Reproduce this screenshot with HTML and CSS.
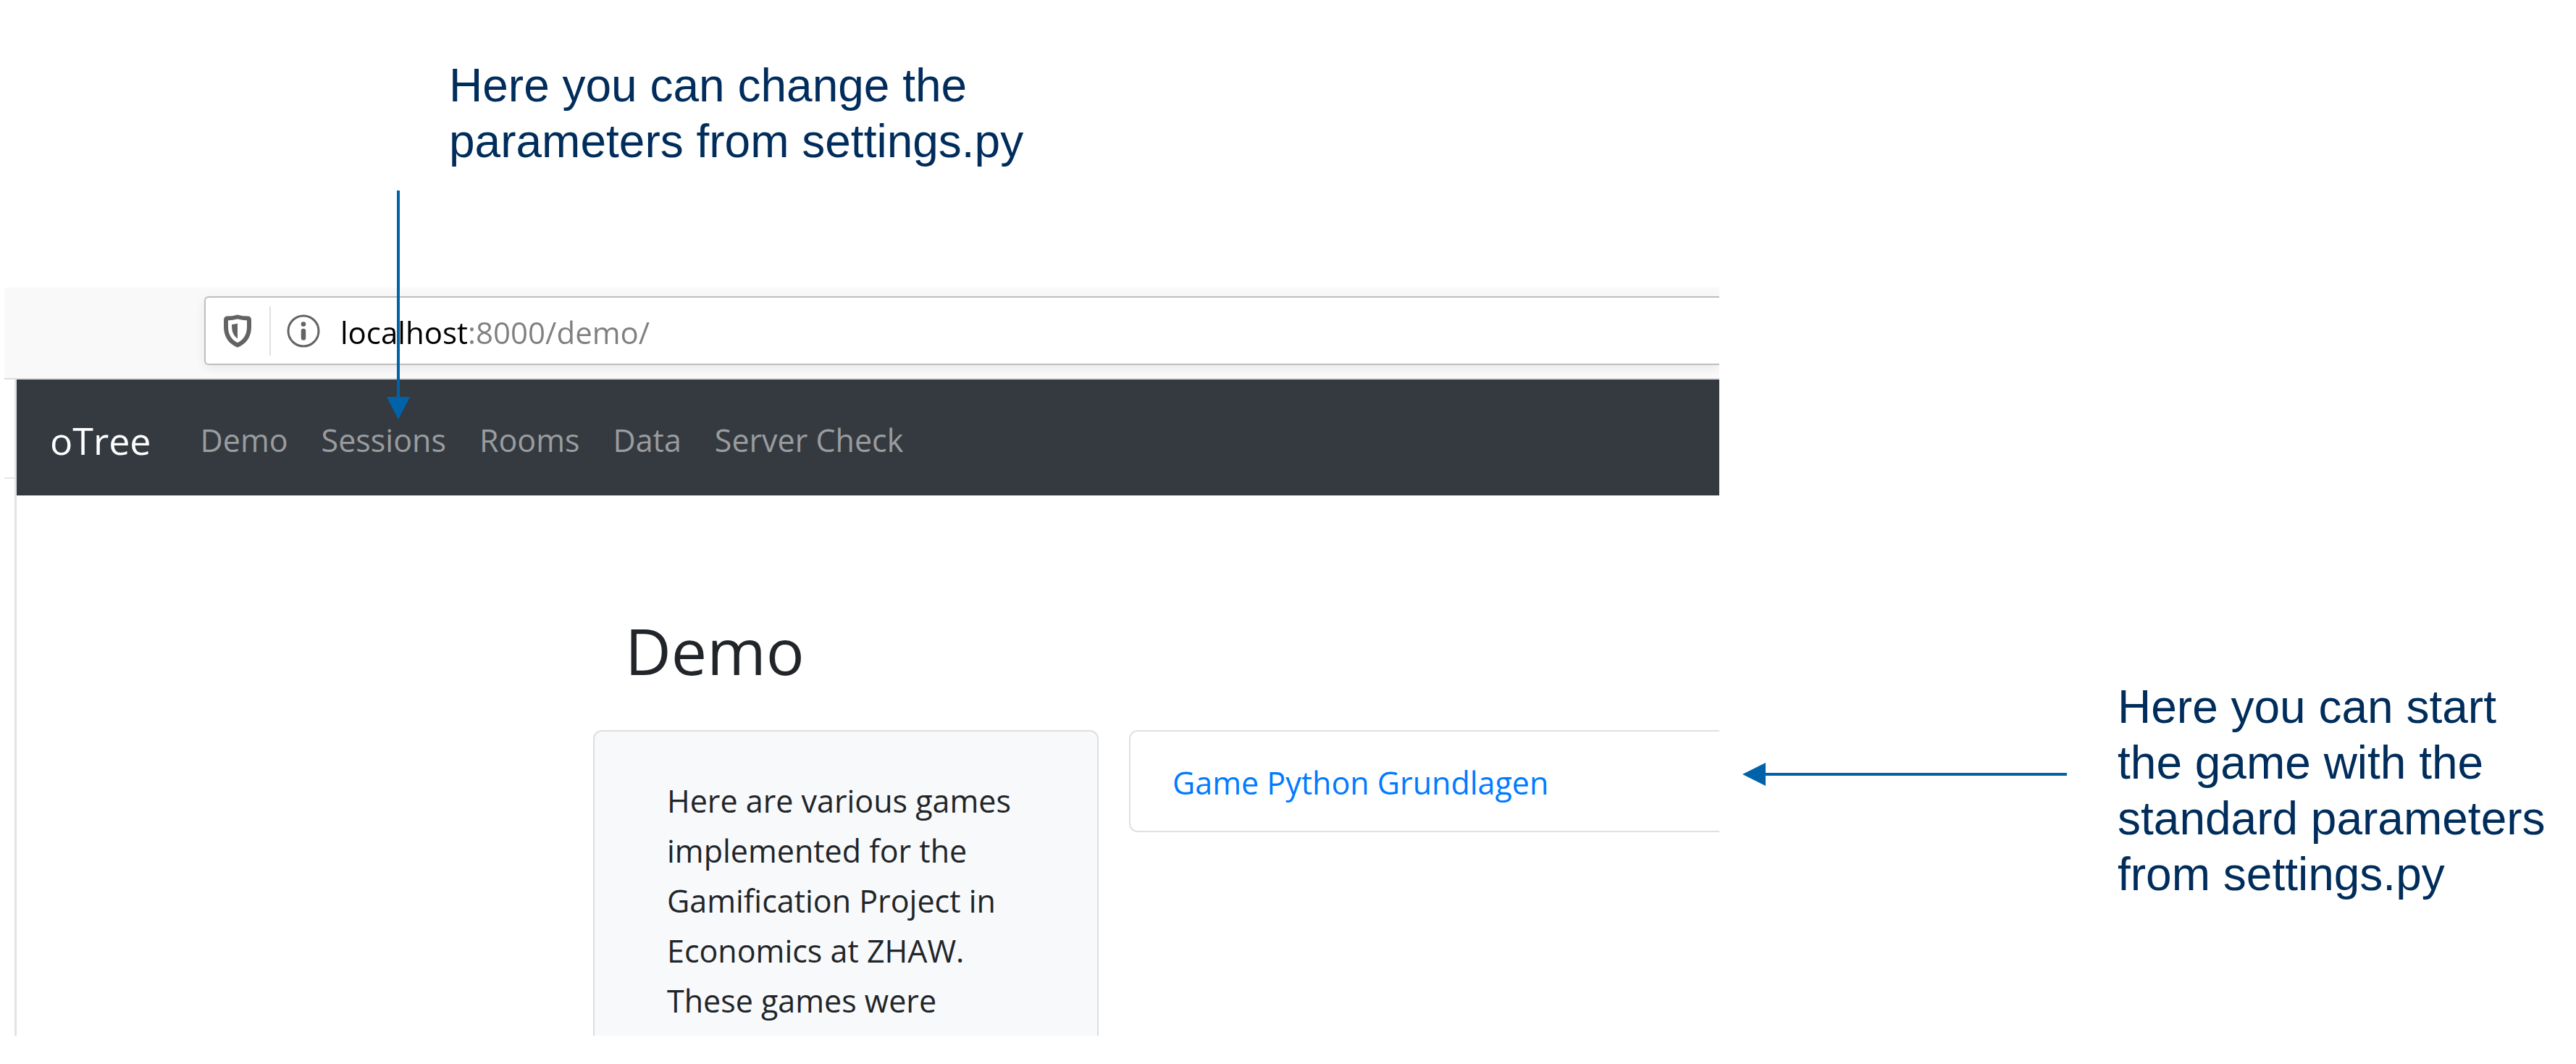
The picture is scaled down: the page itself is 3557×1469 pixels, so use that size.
FILE: index.html
```html
<!DOCTYPE html>
<html lang="en">
<head>
<meta charset="utf-8">
<meta name="viewport" content="width=device-width, initial-scale=1">
<title>oTree demo</title>
<link rel="stylesheet" href="styles.css">
</head>
<body>
<main class="slide">
  <p class="note note-top">Here you can change the<br>parameters from settings.py</p>

  <section class="browser">
    <div class="toolbar">
      <div class="urlbar">
        <button class="icon-button" type="button" aria-label="Tracking protection">
          <svg class="shield" viewBox="0 0 40 46" aria-hidden="true">
            <path d="M20 3.500C15 5 9 5.500 6 5.500Q4 5.500 4 8V17C4 29 10 38 20 42.500C30 38 36 29 36 17V8Q36 5.500 34 5.500C31 5.500 25 5 20 3.500Z" fill="none" stroke="#636363" stroke-width="6" stroke-linejoin="round"/>
            <path d="M20 12.500V33.500C14 29 12 24 12 14Q16 13.500 20 12.500Z" fill="#636363"/>
          </svg>
        </button>
        <button class="icon-button info-button" type="button" aria-label="Site information">
          <svg class="info" viewBox="0 0 46 46" aria-hidden="true">
            <circle cx="23" cy="23" r="21" fill="none" stroke="#636363" stroke-width="3"/>
            <circle cx="23" cy="13.500" r="3.300" fill="#636363"/>
            <path d="M23 23V32.500" stroke="#636363" stroke-width="6.500" stroke-linecap="round"/>
          </svg>
        </button>
        <input class="address" type="text" aria-label="Address" value="localhost:8000/demo/">
      </div>
    </div>
    <div class="window">
      <div class="gutter"></div>
      <div class="viewport">
        <nav class="navbar">
          <a class="brand" href="#">oTree</a>
          <a class="nav-link" href="#">Demo</a>
          <a class="nav-link" href="#">Sessions</a>
          <a class="nav-link" href="#">Rooms</a>
          <a class="nav-link" href="#">Data</a>
          <a class="nav-link" href="#">Server Check</a>
        </nav>
        <div class="content">
          <h1 class="title">Demo</h1>
          <div class="columns">
            <aside class="intro">
              <p class="intro-text">Here are various games implemented for the Gamification Project in Economics at ZHAW. These games were</p>
            </aside>
            <div class="games">
              <a class="game-link" href="#">Game Python Grundlagen</a>
            </div>
          </div>
        </div>
      </div>
    </div>
    <svg class="arrow-down" viewBox="0 0 32 316" aria-hidden="true">
      <path d="M14 0H18V285H32L16 316L0 285H14Z" fill="#0063a9"/>
    </svg>
  </section>

  <div class="callout">
    <svg class="arrow-left" viewBox="0 0 448 32" aria-hidden="true">
      <path d="M0 16L32 0V14H448V18H32V32Z" fill="#0063a9"/>
    </svg>
    <p class="note">Here you can start<br>the game with the<br>standard parameters<br>from settings.py</p>
  </div>
</main>
</body>
</html>
```
FILE: styles.css
```css
* {
  box-sizing: border-box;
}

body {
  margin: 0;
  background: #fff;
  font-family: "Open Sans", "Noto Sans", sans-serif;
  font-size: 43px;
  color: #212529;
}

.slide {
  display: grid;
  grid-template-columns: minmax(0, 1fr) 1183px;
  padding: 80px 0 40px 6px;
}

.note {
  margin: 0;
  font-family: "Liberation Sans", Arial, sans-serif;
  font-size: 64px;
  line-height: 77px;
  color: #002d5b;
  white-space: nowrap;
}

.note-top {
  grid-column: 1 / -1;
  padding: 0 0 163px 614px;
}

/* Browser window */
.browser {
  position: relative;
  min-width: 0;
}

.toolbar {
  padding: 12px 0 18px 276px;
  background: #f9f9f9;
  border-bottom: 2px solid #dcdcdc;
  overflow: hidden;
}

.urlbar {
  display: flex;
  align-items: center;
  height: 95px;
  padding-left: 24px;
  background: #fff;
  border: 2px solid #bebebe;
  border-right: 0;
  border-radius: 6px 0 0 6px;
  box-shadow: 0 4px 14px rgba(0, 0, 0, 0.07);
}

.icon-button {
  display: flex;
  align-items: center;
  height: 68px;
  padding: 0;
  background: none;
  border: 0;
}

.info-button {
  margin-left: 24px;
  padding-left: 22px;
  border-left: 2px solid #e0e0e0;
}

.shield {
  width: 40px;
  height: 46px;
}

.info {
  width: 46px;
  height: 46px;
}

.address {
  flex: 1;
  min-width: 0;
  height: 68px;
  margin-left: 28px;
  padding: 4px 0 0;
  border: 0;
  outline: 0;
  font: inherit;
  font-size: 42px;
  color: #000;
  /* host in black, port and path in grey */
  background: linear-gradient(to right, #000 177px, #808080 177px);
  -webkit-background-clip: text;
  background-clip: text;
  -webkit-text-fill-color: transparent;
}

.window {
  display: flex;
}

.gutter {
  flex: 0 0 14px;
  height: 137px;
  border-bottom: 2px solid #e5e5e5;
}

.viewport {
  flex: 1;
  min-width: 0;
  border-left: 3px solid #e3e3e3;
}

/* Site navigation */
.navbar {
  display: flex;
  align-items: center;
  gap: 46px;
  height: 160px;
  padding: 6px 0 0 46px;
  background: #343a40;
}

.brand {
  margin-right: 22px;
  font-size: 52px;
  color: #fff;
  text-decoration: none;
}

.nav-link {
  color: #9a9c9f;
  text-decoration: none;
  white-space: nowrap;
}

/* Page content */
.content {
  padding: 162px 0 0 796px;
}

.title {
  margin: 0 0 58px;
  padding-left: 44px;
  font-size: 88px;
  font-weight: 400;
  line-height: 104px;
}

.columns {
  display: flex;
  align-items: flex-start;
  gap: 42px;
}

.intro {
  flex: 0 0 698px;
  padding: 61px 100px 14px;
  background: #f8f9fb;
  border: 2px solid #dedede;
  border-bottom: 0;
  border-radius: 12px 12px 0 0;
}

.intro-text {
  margin: 0;
  line-height: 69px;
}

.games {
  flex: 1;
  min-width: 0;
  padding: 37px 0 32px 58px;
  border: 2px solid #e0e0e0;
  border-right: 0;
  border-radius: 12px 0 0 12px;
}

.game-link {
  display: block;
  line-height: 68px;
  color: #007bff;
  text-decoration: none;
  white-space: nowrap;
}

/* Arrows and side note */
.arrow-down {
  position: absolute;
  top: -134px;
  left: 528px;
  width: 32px;
  height: 316px;
}

.callout {
  display: flex;
  align-items: flex-start;
  gap: 70px;
  padding: 541px 0 0 32px;
}

.arrow-left {
  flex: 0 0 448px;
  height: 32px;
  margin-top: 115px;
}
```
